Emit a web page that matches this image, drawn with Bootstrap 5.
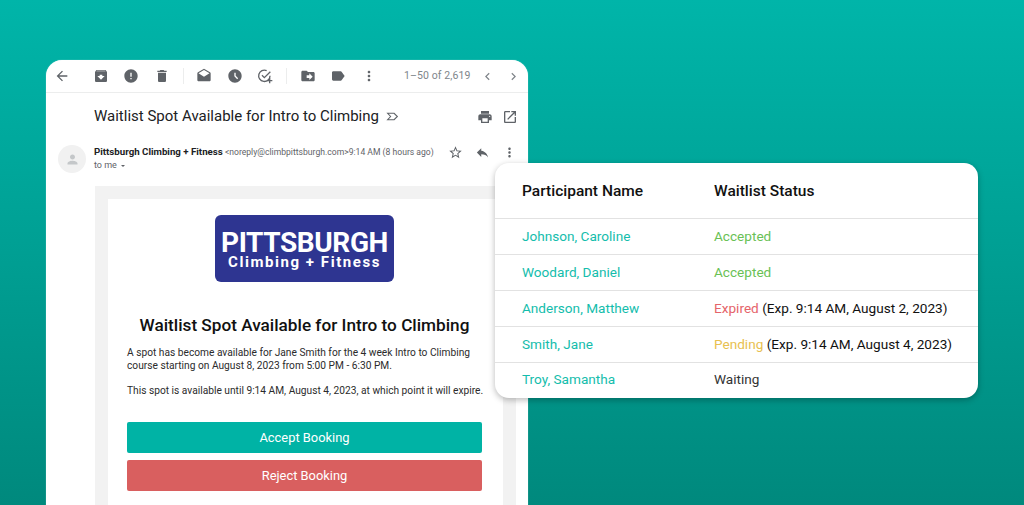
<!DOCTYPE html>
<html lang="en">
<head>
    <meta charset="UTF-8">
    <meta name="viewport" content="width=device-width, initial-scale=1.0">
    <title>Waitlist Spot Available</title>
    <link href="https://cdn.jsdelivr.net/npm/bootstrap@5.3.2/dist/css/bootstrap.min.css" rel="stylesheet">
    <style>
        html, body { height: 100%; overflow: hidden; }
        body {
            position: relative;
            padding: 60px 0 0 46px;
            background: linear-gradient(180deg, #00b5a9 0%, #00897d 100%);
            font-family: Roboto, sans-serif;
        }
        .mail-win {
            width: 482px;
            height: 445px;
            background: #fff;
            border-radius: 16px 16px 0 0;
            overflow: hidden;
            box-shadow: 0 0 1px rgba(255,255,255,.7);
        }
        .tool-bar { height: 33px; padding-left: 1px; border-bottom: 1px solid #eceded; }
        .tool-cell { width: 30.5px; height: 100%; flex: none; }
        .tool-cell svg, .ico { fill: #5f6368; width: 16px; height: 16px; flex: none; }
        .tool-cell.chev-cell { width: 26px; }
        .tool-cell .chev { width: 15px; height: 15px; fill: #80868b; }
        .tool-sep { width: 1px; height: 16px; background: #eceded; margin: 0 5.5px; flex: none; }
        .page-count { font-size: 10.5px; color: #80868b; margin-left: 20px; width: 70px; letter-spacing: .1px; white-space: nowrap; }
        .subject-row { height: 47px; padding-left: 48px; padding-right: 10px; }
        .subject-txt { font-size: 15px; color: #202124; line-height: 1; white-space: nowrap; }
        .imp-ico { width: 13px; height: 13px; margin-left: 7px; fill: none; stroke: #5f6368; stroke-width: 2; }
        .sub-acts { gap: 9px; }
        .sender-row { padding: 5px 11px 0 12px; gap: 8px; height: 46px; }
        .avatar-dot { width: 28px; height: 28px; border-radius: 50%; background: #f1f1f1; flex: none; }
        .avatar-dot svg { width: 15px; height: 15px; fill: #c4c7c9; }
        .sender-line { font-size: 8.6px; line-height: 14px; color: #5f6368; white-space: nowrap; }
        .sender-line b { color: #202124; font-weight: 700; font-size: 9.7px; }
        .sender-mail { font-size: 8.6px; color: #5f6368; }
        .to-me { font-size: 9px; color: #5f6368; line-height: 12px; }
        .to-me i { display: inline-block; border: 2.5px solid transparent; border-top-color: #5f6368; border-bottom: 0; vertical-align: middle; margin-left: 2px; }
        .sender-acts { margin-left: auto; gap: 12px; }
        .sender-acts svg { width: 15px; height: 15px; }
        .mail-wrap { margin: 0 12px 0 49px; background: #f2f2f2; padding: 13px 13px 0 13px; height: 319px; }
        .mail-paper { background: #fff; height: 100%; padding: 16px 21px 0 19px; }
        .club-logo { width: 179px; height: 67px; background: #2e3591; border-radius: 6px; color: #fff; line-height: 1; font-weight: 700; padding-top: 1px; }
        .club-top { font-size: 28px; letter-spacing: -.4px; }
        .club-sub { font-size: 15px; letter-spacing: 1.55px; margin-top: -2px; }
        .mail-title { font-size: 17.2px; font-weight: 500; color: #111; margin: 32px 0 11px; line-height: 22px; white-space: nowrap; }
        .mail-copy { font-size: 10.2px; line-height: 12.6px; color: #2b2b2b; margin-bottom: 12.5px; white-space: nowrap; }
        .act-btn { height: 31px; font-size: 12.9px; border-radius: 2px; border: 0; color: #fff; padding: 0; line-height: 31px; }
        .act-ok, .act-ok:hover { background: #00b3a5; color: #fff; margin-top: 25px; }
        .act-no, .act-no:hover { background: #d95f5f; color: #fff; margin-top: 6.5px; }
        .status-card {
            position: absolute; left: 495px; top: 163px; width: 483px; height: 235px;
            background: #fff; border-radius: 14px; overflow: hidden;
            box-shadow: 0 2px 6px rgba(0,0,0,.28);
        }
        .status-tbl { margin: 0; table-layout: fixed; width: 100%; font-size: 13.6px; }
        .status-tbl th, .status-tbl td { padding: 0; vertical-align: middle; border-bottom: 1px solid #e2e2e2; color: #111; white-space: nowrap; font-weight: 400; }
        .status-tbl th { height: 55.5px; padding-top: 3px; font-size: 15.5px; font-weight: 500; color: #111; }
        .status-tbl td { height: 36px; }
        .status-tbl tr:last-child td { border-bottom: 0; padding-bottom: 3px; color: #333; }
        .status-tbl .name-col { padding-left: 27px; width: 219px; }
        .status-tbl .name-cell, .status-tbl tr:last-child .name-cell { color: #14bdac; }
        .st-ok { color: #69c155; }
        .st-bad { color: #e5646a; }
        .st-wait { color: #e8c04f; }
    </style>
</head>
<body>
    <div class="mail-win">
        <div class="tool-bar d-flex align-items-center">
            <span class="tool-cell d-flex align-items-center justify-content-center"><svg viewBox="0 0 24 24"><path d="M20 11H7.83l5.59-5.59L12 4l-8 8 8 8 1.41-1.41L7.83 13H20v-2z"/></svg></span>
            <span class="d-flex h-100 ms-2">
                <span class="tool-cell d-flex align-items-center justify-content-center"><svg viewBox="0 0 24 24"><path d="M20.54 5.23l-1.39-1.68C18.88 3.21 18.47 3 18 3H6c-.47 0-.88.21-1.16.55L3.46 5.23C3.17 5.57 3 6.02 3 6.5V19c0 1.1.9 2 2 2h14c1.1 0 2-.9 2-2V6.5c0-.48-.17-.93-.46-1.27zM12 17.5L6.5 12H10v-2h4v2h3.5L12 17.5zM5.12 5l.81-1h12l.94 1H5.12z"/></svg></span>
                <span class="tool-cell d-flex align-items-center justify-content-center"><svg viewBox="0 0 24 24"><path d="M12 2C6.48 2 2 6.48 2 12s4.48 10 10 10 10-4.48 10-10S17.52 2 12 2zm1 15h-2v-2h2v2zm0-4h-2V7h2v6z"/></svg></span>
                <span class="tool-cell d-flex align-items-center justify-content-center"><svg viewBox="0 0 24 24"><path d="M6 19c0 1.1.9 2 2 2h8c1.1 0 2-.9 2-2V7H6v12zM19 4h-3.5l-1-1h-5l-1 1H5v2h14V4z"/></svg></span>
            </span>
            <span class="tool-sep"></span>
            <span class="tool-cell d-flex align-items-center justify-content-center"><svg viewBox="0 0 24 24"><path d="M21.99 8c0-.72-.37-1.35-.94-1.7L12 1 2.95 6.3C2.38 6.65 2 7.28 2 8v10c0 1.1.9 2 2 2h16c1.1 0 2-.9 2-2l-.01-10zM12 13L3.74 7.84 12 3l8.26 4.84L12 13z"/></svg></span>
            <span class="tool-cell d-flex align-items-center justify-content-center"><svg viewBox="0 0 24 24"><path d="M11.99 2C6.47 2 2 6.48 2 12s4.47 10 9.99 10C17.52 22 22 17.52 22 12S17.52 2 11.99 2zm3.3 14.71L11 12.41V7h2v4.59l3.71 3.71-1.42 1.41z"/></svg></span>
            <span class="tool-cell d-flex align-items-center justify-content-center"><svg viewBox="0 0 24 24"><path d="M19.5 11.5A8.5 8.5 0 1 1 14.5 4" fill="none" stroke="#5f6368" stroke-width="2"/><path d="M7.5 11l3.5 3.5L20 5.5" fill="none" stroke="#5f6368" stroke-width="2"/><path d="M18 15h2v3h3v2h-3v3h-2v-3h-3v-2h3z"/></svg></span>
            <span class="tool-sep"></span>
            <span class="tool-cell d-flex align-items-center justify-content-center"><svg viewBox="0 0 24 24"><path d="M20 6h-8l-2-2H4c-1.1 0-1.99.9-1.99 2L2 18c0 1.1.9 2 2 2h16c1.1 0 2-.9 2-2V8c0-1.1-.9-2-2-2zm-6 12v-3h-4v-4h4V8l5 5-5 5z"/></svg></span>
            <span class="tool-cell d-flex align-items-center justify-content-center"><svg viewBox="0 0 24 24"><path d="M17.63 5.84C17.27 5.33 16.67 5 16 5L5 5.01C3.9 5.01 3 5.9 3 7v10c0 1.1.9 1.99 2 1.99L16 19c.67 0 1.27-.33 1.63-.84L22 12l-4.37-6.16z"/></svg></span>
            <span class="tool-cell d-flex align-items-center justify-content-center"><svg viewBox="0 0 24 24"><path d="M12 8c1.1 0 2-.9 2-2s-.9-2-2-2-2 .9-2 2 .9 2 2 2zm0 2c-1.1 0-2 .9-2 2s.9 2 2 2 2-.9 2-2-.9-2-2-2zm0 6c-1.1 0-2 .9-2 2s.9 2 2 2 2-.9 2-2-.9-2-2-2z"/></svg></span>
            <span class="page-count">1–50 of 2,619</span>
            <span class="tool-cell chev-cell d-flex align-items-center justify-content-center"><svg class="chev" viewBox="0 0 24 24"><path d="M15.41 7.41L14 6l-6 6 6 6 1.41-1.41L10.83 12z"/></svg></span>
            <span class="tool-cell chev-cell d-flex align-items-center justify-content-center"><svg class="chev" viewBox="0 0 24 24"><path d="M10 6L8.59 7.41 13.17 12l-4.58 4.59L10 18l6-6z"/></svg></span>
        </div>

        <div class="subject-row d-flex align-items-center">
            <span class="subject-txt">Waitlist Spot Available for Intro to Climbing</span>
            <svg class="imp-ico" viewBox="0 0 24 24"><path d="M3 6h12l6 6-6 6H3l5.5-6z"/></svg>
            <span class="sub-acts d-flex ms-auto">
                <svg class="ico" viewBox="0 0 24 24"><path d="M19 8H5c-1.66 0-3 1.34-3 3v6h4v4h12v-4h4v-6c0-1.66-1.34-3-3-3zm-3 11H8v-5h8v5zm3-7c-.55 0-1-.45-1-1s.45-1 1-1 1 .45 1 1-.45 1-1 1zm-1-9H6v4h12V3z"/></svg>
                <svg class="ico" viewBox="0 0 24 24"><path d="M19 19H5V5h7V3H5c-1.11 0-2 .9-2 2v14c0 1.1.89 2 2 2h14c1.1 0 2-.9 2-2v-7h-2v7zM14 3v2h3.59l-9.83 9.83 1.41 1.41L19 6.41V10h2V3h-7z"/></svg>
            </span>
        </div>

        <div class="sender-row d-flex align-items-start">
            <span class="avatar-dot d-flex align-items-center justify-content-center"><svg viewBox="0 0 24 24"><path d="M12 12c2.21 0 4-1.79 4-4s-1.79-4-4-4-4 1.79-4 4 1.79 4 4 4zm0 2c-2.67 0-8 1.34-8 4v2h16v-2c0-2.66-5.33-4-8-4z"/></svg></span>
            <div>
                <div class="sender-line"><b>Pittsburgh Climbing + Fitness</b> <span class="sender-mail">&lt;noreply@climbpittsburgh.com&gt;</span>9:14 AM (8 hours ago)</div>
                <div class="to-me">to me <i></i></div>
            </div>
            <span class="sender-acts d-flex">
                <svg class="ico" viewBox="0 0 24 24"><path d="M22 9.24l-7.19-.62L12 2 9.19 8.63 2 9.24l5.46 4.73L5.82 21 12 17.27 18.18 21l-1.63-7.03L22 9.24zM12 15.4l-3.76 2.27 1-4.28-3.32-2.88 4.38-.38L12 6.1l1.71 4.04 4.38.38-3.32 2.88 1 4.28L12 15.4z"/></svg>
                <svg class="ico" viewBox="0 0 24 24"><path d="M10 9V5l-7 7 7 7v-4.1c5 0 8.5 1.6 11 5.1-1-5-4-10-11-11z"/></svg>
                <svg class="ico" viewBox="0 0 24 24"><path d="M12 8c1.1 0 2-.9 2-2s-.9-2-2-2-2 .9-2 2 .9 2 2 2zm0 2c-1.1 0-2 .9-2 2s.9 2 2 2 2-.9 2-2-.9-2-2-2zm0 6c-1.1 0-2 .9-2 2s.9 2 2 2 2-.9 2-2-.9-2-2-2z"/></svg>
            </span>
        </div>

        <div class="mail-wrap">
            <div class="mail-paper">
                <div class="club-logo d-flex flex-column align-items-center justify-content-center mx-auto">
                    <div class="club-top">PITTSBURGH</div>
                    <div class="club-sub">Climbing + Fitness</div>
                </div>
                <h1 class="mail-title text-center">Waitlist Spot Available for Intro to Climbing</h1>
                <p class="mail-copy">A spot has become available for Jane Smith for the 4 week Intro to Climbing<br>course starting on August 8, 2023 from 5:00 PM - 6:30 PM.</p>
                <p class="mail-copy">This spot is available until 9:14 AM, August 4, 2023, at which point it will expire.</p>
                <a href="#" class="btn act-btn act-ok d-block w-100">Accept Booking</a>
                <a href="#" class="btn act-btn act-no d-block w-100">Reject Booking</a>
            </div>
        </div>
    </div>

    <div class="status-card">
        <table class="table status-tbl">
            <thead>
                <tr><th class="name-col">Participant Name</th><th>Waitlist Status</th></tr>
            </thead>
            <tbody>
                <tr><td class="name-col name-cell">Johnson, Caroline</td><td><span class="st-ok">Accepted</span></td></tr>
                <tr><td class="name-col name-cell">Woodard, Daniel</td><td><span class="st-ok">Accepted</span></td></tr>
                <tr><td class="name-col name-cell">Anderson, Matthew</td><td><span class="st-bad">Expired</span> (Exp. 9:14 AM, August 2, 2023)</td></tr>
                <tr><td class="name-col name-cell">Smith, Jane</td><td><span class="st-wait">Pending</span> (Exp. 9:14 AM, August 4, 2023)</td></tr>
                <tr><td class="name-col name-cell">Troy, Samantha</td><td>Waiting</td></tr>
            </tbody>
        </table>
    </div>

    <script src="https://cdn.jsdelivr.net/npm/bootstrap@5.3.2/dist/js/bootstrap.bundle.min.js"></script>
</body>
</html>
